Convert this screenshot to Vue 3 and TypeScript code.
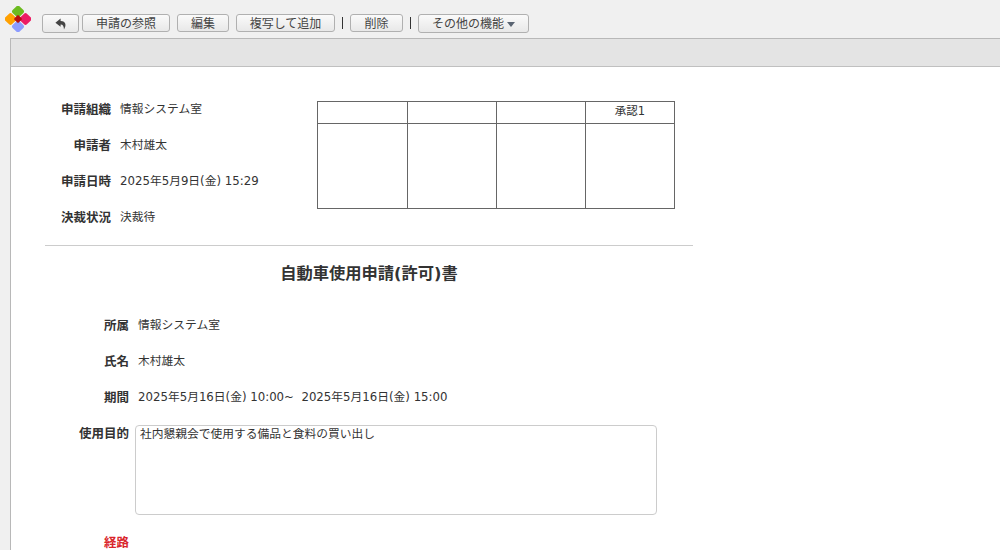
<script setup lang="ts">
const headRows = [
  { label: '申請組織', value: '情報システム室' },
  { label: '申請者', value: '木村雄太' },
  { label: '申請日時', value: '2025年5月9日(金) 15:29' },
  { label: '決裁状況', value: '決裁待' },
]
const stamps = ['', '', '', '承認1']
const formRows = [
  { label: '所属', value: '情報システム室' },
  { label: '氏名', value: '木村雄太' },
  { label: '期間', value: '2025年5月16日(金) 10:00~  2025年5月16日(金) 15:00' },
]
</script>

<template>
  <div class="page">
    <header class="toolbar">
      <svg class="logo" width="26" height="26" viewBox="0 0 26 26">
        <rect x="8.2" y="0.7" width="9.6" height="9.6" rx="2" transform="rotate(45 13 5.5)" fill="#6cbb1f" />
        <rect x="0.7" y="8.2" width="9.6" height="9.6" rx="2" transform="rotate(45 5.5 13)" fill="#ffa000" />
        <rect x="15.7" y="8.2" width="9.6" height="9.6" rx="2" transform="rotate(45 20.5 13)" fill="#ec1c64" />
        <rect x="8.2" y="15.7" width="9.6" height="9.6" rx="2" transform="rotate(45 13 20.5)" fill="#8c9cff" />
        <rect x="10" y="10" width="6" height="6" rx="1" transform="rotate(45 13 13)" fill="#b80f0f" />
      </svg>
      <button class="btn back" type="button" aria-label="戻る">
        <svg width="12" height="12" viewBox="0 0 12 12">
          <path d="M5.6 0.6 L0.4 4.8 L5.6 8.8 V6.4 C7.8 6.3 8.8 7.8 9 11.4 C11.6 7.6 11 3 5.6 3.1 Z" fill="#444" />
        </svg>
      </button>
      <button class="btn b-ref" type="button">申請の参照</button>
      <button class="btn b-edit" type="button">編集</button>
      <button class="btn b-copy" type="button">複写して追加</button>
      <i class="sep"></i>
      <button class="btn b-del" type="button">削除</button>
      <i class="sep"></i>
      <button class="btn b-more" type="button">その他の機能<i class="caret"></i></button>
    </header>

    <main class="panel">
      <div class="band"></div>
      <div class="content">
        <section class="summary">
          <dl class="head-list">
            <div v-for="r in headRows" :key="r.label" class="head-row">
              <dt>{{ r.label }}</dt>
              <dd>{{ r.value }}</dd>
            </div>
          </dl>
          <table class="stamps">
            <colgroup>
              <col class="c1" /><col class="c2" /><col class="c2" /><col class="c2" />
            </colgroup>
            <tbody>
              <tr class="stamp-head"><td v-for="(s, i) in stamps" :key="i">{{ s }}</td></tr>
              <tr class="stamp-body"><td v-for="(s, i) in stamps" :key="i"></td></tr>
            </tbody>
          </table>
        </section>
        <hr class="rule" />
        <h1 class="title">自動車使用申請(許可)書</h1>
        <dl class="form-list">
          <div v-for="r in formRows" :key="r.label" class="form-row">
            <dt>{{ r.label }}</dt>
            <dd>{{ r.value }}</dd>
          </div>
        </dl>
        <div class="purpose">
          <span class="purpose-label">使用目的</span>
          <div class="textarea">社内懇親会で使用する備品と食料の買い出し</div>
        </div>
        <div class="route">経路</div>
      </div>
    </main>
  </div>
</template>

<style scoped>
.page {
  width: 1000px;
  height: 550px;
  overflow: hidden;
  background: #f0f0f0;
  font-family: "DejaVu Sans", "Noto Sans CJK JP", sans-serif;
  font-size: 11.75px;
  color: #333;
  display: flex;
  flex-direction: column;
}
.toolbar {
  height: 38px;
  flex: none;
  display: flex;
  align-items: flex-start;
  position: relative;
  padding: 14px 0 0 42px;
  box-sizing: border-box;
}
.logo {
  position: absolute;
  left: 5px;
  top: 6px;
}
.btn {
  height: 19px;
  box-sizing: border-box;
  border: 1px solid #b0b0b0;
  border-radius: 3px;
  background: linear-gradient(#fafafa, #e8e8e8);
  padding: 2px 0 0;
  font: inherit;
  font-size: 12px;
  line-height: 15px;
  color: #444;
  display: flex;
  align-items: center;
  justify-content: center;
  flex: none;
}
.back { width: 37px; height: 19px; margin-right: 3px; padding: 1px 0 0; }
.b-ref { width: 88px; height: 18px; margin-right: 7px; }
.b-edit { width: 52px; height: 18px; margin-right: 7px; }
.b-copy { width: 99px; height: 18px; }
.b-del { width: 53px; height: 18px; }
.b-more { width: 111px; }
.sep {
  width: 1px;
  height: 12px;
  margin: 3px 7px 0;
  background: #333;
  flex: none;
}
.caret {
  display: inline-block;
  width: 0;
  height: 0;
  margin: 0 0 1px 3px;
  border-left: 4.5px solid transparent;
  border-right: 4.5px solid transparent;
  border-top: 5px solid #5a6472;
}
.panel {
  flex: 1;
  margin-left: 10px;
  background: #fff;
  border-left: 1px solid #b8b8b8;
  border-top: 1px solid #b8b8b8;
  min-height: 0;
}
.band {
  height: 27px;
  background: #e4e4e4;
  border-bottom: 1px solid #c0c0c0;
}
.content {
  width: 648px;
  margin-left: 34px;
  padding-top: 24px;
}
.summary {
  display: flex;
  align-items: flex-start;
  height: 154px;
}
.head-list, .form-list {
  margin: 0;
}
dd { margin: 0; }
.head-list {
  width: 272px;
  flex: none;
}
.head-row {
  display: flex;
  height: 36px;
  line-height: 37px;
}
.head-row dt {
  width: 66px;
  text-align: right;
  font-size: 12.5px;
  font-weight: 700;
}
.head-row dd { margin-left: 9px; }
.stamps {
  border-collapse: collapse;
  width: 358px;
  table-layout: fixed;
  margin-top: 10px;
}
.c1 { width: 90px; }
.c2 { width: 89px; }
.stamps td {
  border: 1px solid #666;
  padding: 0;
  text-align: center;
  font-size: 11.5px;
}
.stamp-head td { height: 22px; line-height: 16px; padding-bottom: 4px; box-sizing: border-box; }
.stamp-body td { height: 84px; }
.rule {
  margin: 0;
  border: 0;
  border-top: 1px solid #ccc;
}
.title {
  margin: 0;
  padding-top: 17px;
  height: 50px;
  box-sizing: border-box;
  line-height: 22px;
  font-size: 16.3px;
  font-weight: 700;
  text-align: center;
}
.form-list { margin-top: 11px; }
.form-row {
  display: flex;
  height: 36px;
  line-height: 37px;
}
.form-row dt {
  width: 84px;
  text-align: right;
  font-size: 12.5px;
  font-weight: 700;
}
.form-row dd { margin-left: 9px; white-space: pre; }
.purpose {
  display: flex;
  margin-top: 10px;
  align-items: flex-start;
}
.purpose-label {
  width: 84px;
  text-align: right;
  font-size: 12.5px;
  font-weight: 700;
  line-height: 18px;
  flex: none;
}
.textarea {
  margin-left: 6px;
  width: 522px;
  height: 90px;
  box-sizing: border-box;
  border: 1px solid #ccc;
  border-radius: 4px;
  padding: 1px 4px 0;
  line-height: 15px;
}
.route {
  width: 84px;
  text-align: right;
  margin-top: 19px;
  color: #d9262c;
  font-size: 12.5px;
  font-weight: 700;
  line-height: 18px;
}
</style>
